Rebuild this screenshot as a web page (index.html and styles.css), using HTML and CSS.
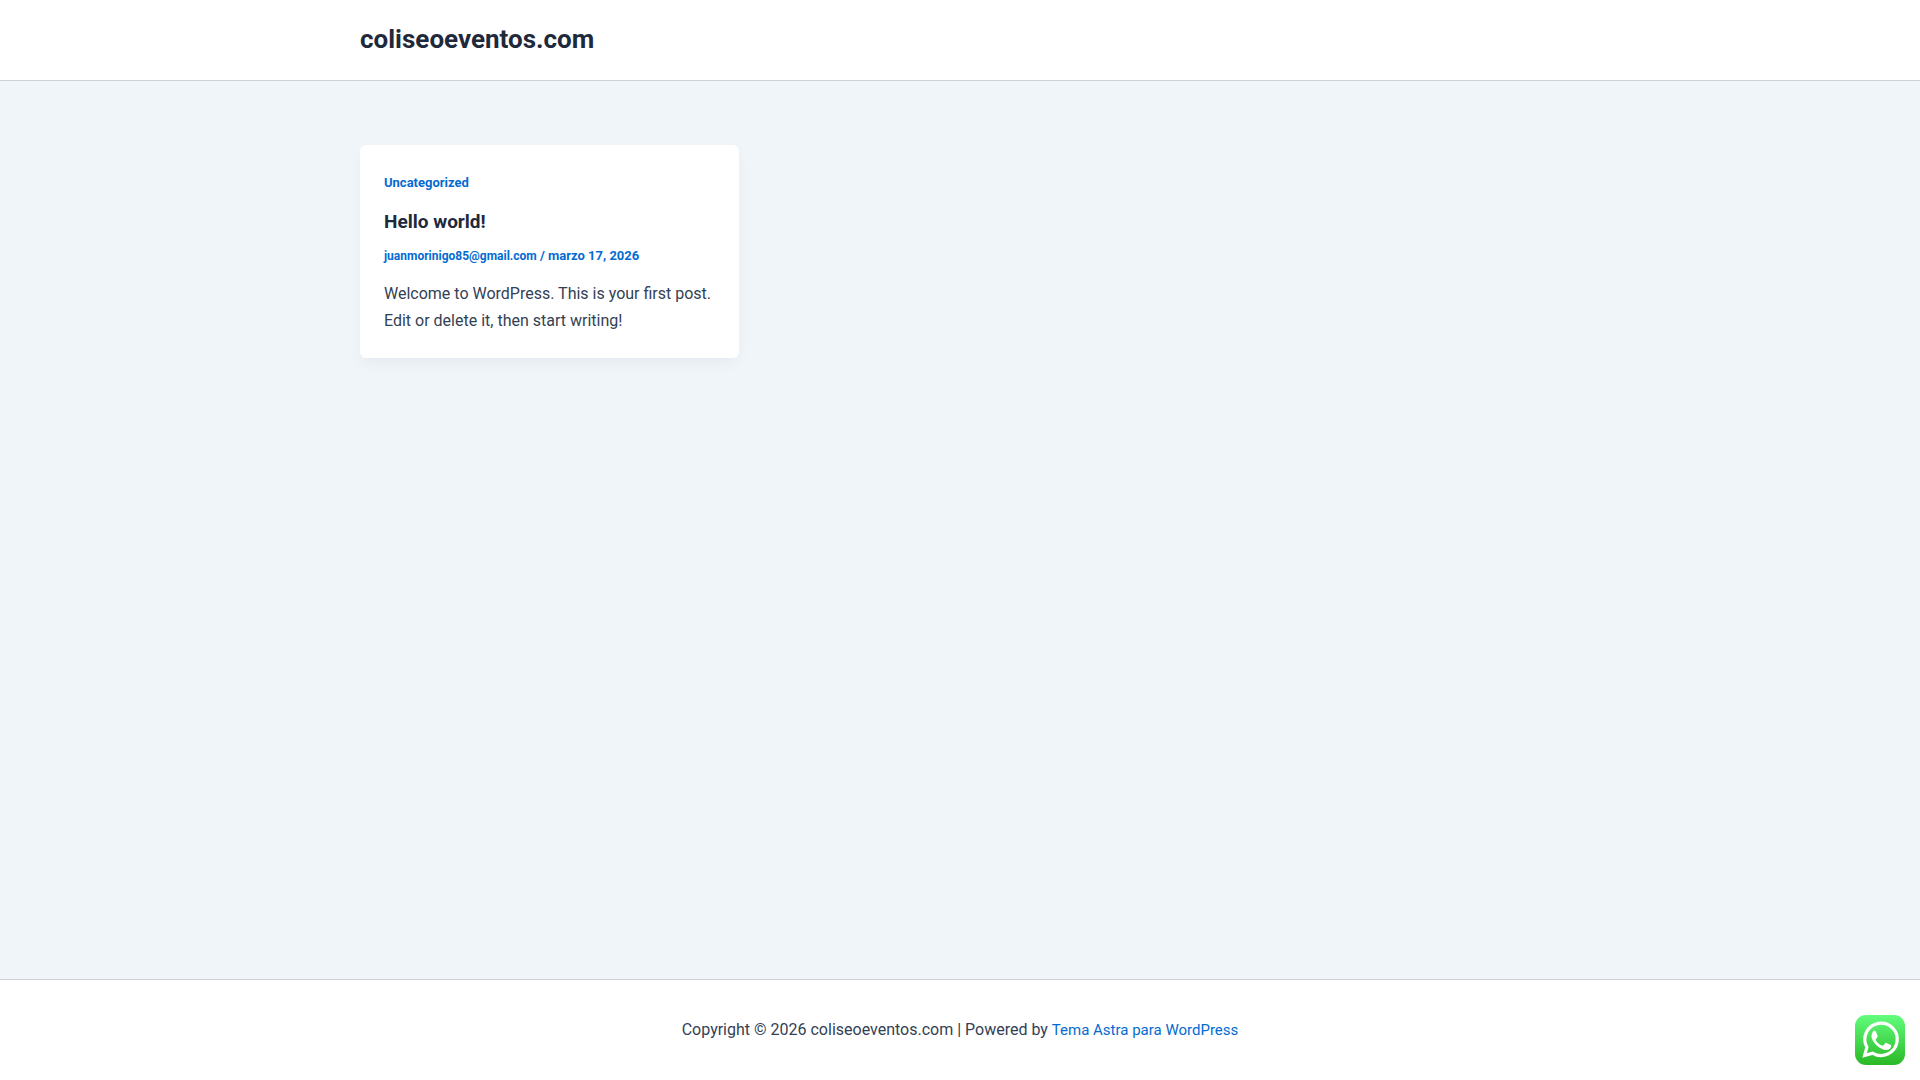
FILE: index.html
```
<!DOCTYPE html>
<html lang="es">
<head>
<meta charset="utf-8">
<meta name="viewport" content="width=device-width, initial-scale=1">
<title>coliseoeventos.com</title>
<link rel="stylesheet" href="styles.css">
</head>
<body>
<header class="site-header">
  <div class="container">
    <a class="site-title" href="#">coliseoeventos.com</a>
  </div>
</header>
<main class="site-content">
  <div class="container post-grid">
    <article class="post-card">
      <a class="post-category" href="#">Uncategorized</a>
      <h2 class="post-title"><a href="#">Hello world!</a></h2>
      <div class="post-meta"><a class="post-author" href="#">juanmorinigo85@gmail.com</a> / marzo 17, 2026</div>
      <p class="post-excerpt">Welcome to WordPress. This is your first post. Edit or delete it, then start writing!</p>
    </article>
  </div>
</main>
<footer class="site-footer">
  <p class="copyright">Copyright © 2026 coliseoeventos.com | Powered by <a href="#">Tema Astra para WordPress</a></p>
</footer>
<a class="whatsapp" href="#" aria-label="WhatsApp">
  <svg viewBox="0 0 50 50" width="50" height="50" aria-hidden="true">
    <defs>
      <linearGradient id="green" x1="0" y1="0" x2="0" y2="1">
        <stop offset="0" stop-color="#61fd7d"/>
        <stop offset="1" stop-color="#2bb826"/>
      </linearGradient>
    </defs>
    <rect width="50" height="50" rx="11" fill="url(#green)"/>
    <path fill="none" stroke="#fff" stroke-width="3.2" d="M9.6 40.4l2.3-8.2a16.2 16.2 0 1 1 6 6.1z"/>
    <path fill="#fff" d="M18.6 15.8h1.2c.6 0 .9.3 1.2 1l1.6 3.9c.2.5.1.9-.1 1.3-.5.9-1.2 1.5-1.7 2.1-.3.4-.2.8.1 1.3 1.5 2.4 3.6 4.1 6.3 5.2.5.2.9.2 1.2-.2l1.7-2.2c.4-.5.8-.6 1.4-.3l3.9 1.9c.6.3.8.6.8 1.2-.1 2.4-2.3 4-4.7 4.1-2 0-6.400-1.600-9.200-4.200-2.700-2.400-5.700-6.200-5.800-9.500 0-2.400 1.100-4.800 2.100-5.600z"/>
  </svg>
</a>
</body>
</html>
```
FILE: styles.css
```
* {
  box-sizing: border-box;
}

body {
  display: flex;
  flex-direction: column;
  min-height: 100vh;
  margin: 0;
  background: #f0f5fa;
  color: #334155;
  font-family: Roboto, sans-serif;
  font-size: 16px;
  line-height: 27px;
}

a {
  color: #046bd2;
  text-decoration: none;
}

.container {
  width: 100%;
  max-width: 1240px;
  margin: 0 auto;
  padding: 0 20px;
}

.site-header {
  padding: 23px 0 25px;
  background: #fff;
  border-bottom: 1px solid #cdd0d9;
}

.site-title {
  display: block;
  color: #1e293b;
  font-size: 26px;
  font-weight: 700;
  line-height: 32px;
}

.site-content {
  flex: 1;
  padding: 64px 0;
}

.post-grid {
  display: grid;
  grid-template-columns: repeat(3, 1fr);
  gap: 32px;
}

.post-card {
  padding: 24px;
  background: #fff;
  border-radius: 6px;
  box-shadow: 0 6px 15px -2px rgba(16, 24, 40, 0.05);
}

.post-category {
  display: block;
  font-size: 13px;
  font-weight: 700;
}

.post-title {
  margin: 12px 0 8px;
  font-size: 19px;
  font-weight: 700;
  line-height: 28px;
}

.post-title a {
  color: #1e293b;
}

.post-meta {
  color: #046bd2;
  font-size: 13px;
  font-weight: 700;
  line-height: 24px;
}

.post-author {
  font-size: 12px;
}

.post-excerpt {
  margin: 12px 0 0;
}

.site-footer {
  padding: 36px 20px;
  background: #fff;
  border-top: 1px solid #cdd0d9;
  text-align: center;
}

.copyright {
  margin: 0;
  line-height: 28px;
}

.copyright a {
  font-size: 15px;
}

.whatsapp {
  position: fixed;
  right: 15px;
  bottom: 15px;
  width: 50px;
  height: 50px;
}

.whatsapp svg {
  display: block;
}
```
